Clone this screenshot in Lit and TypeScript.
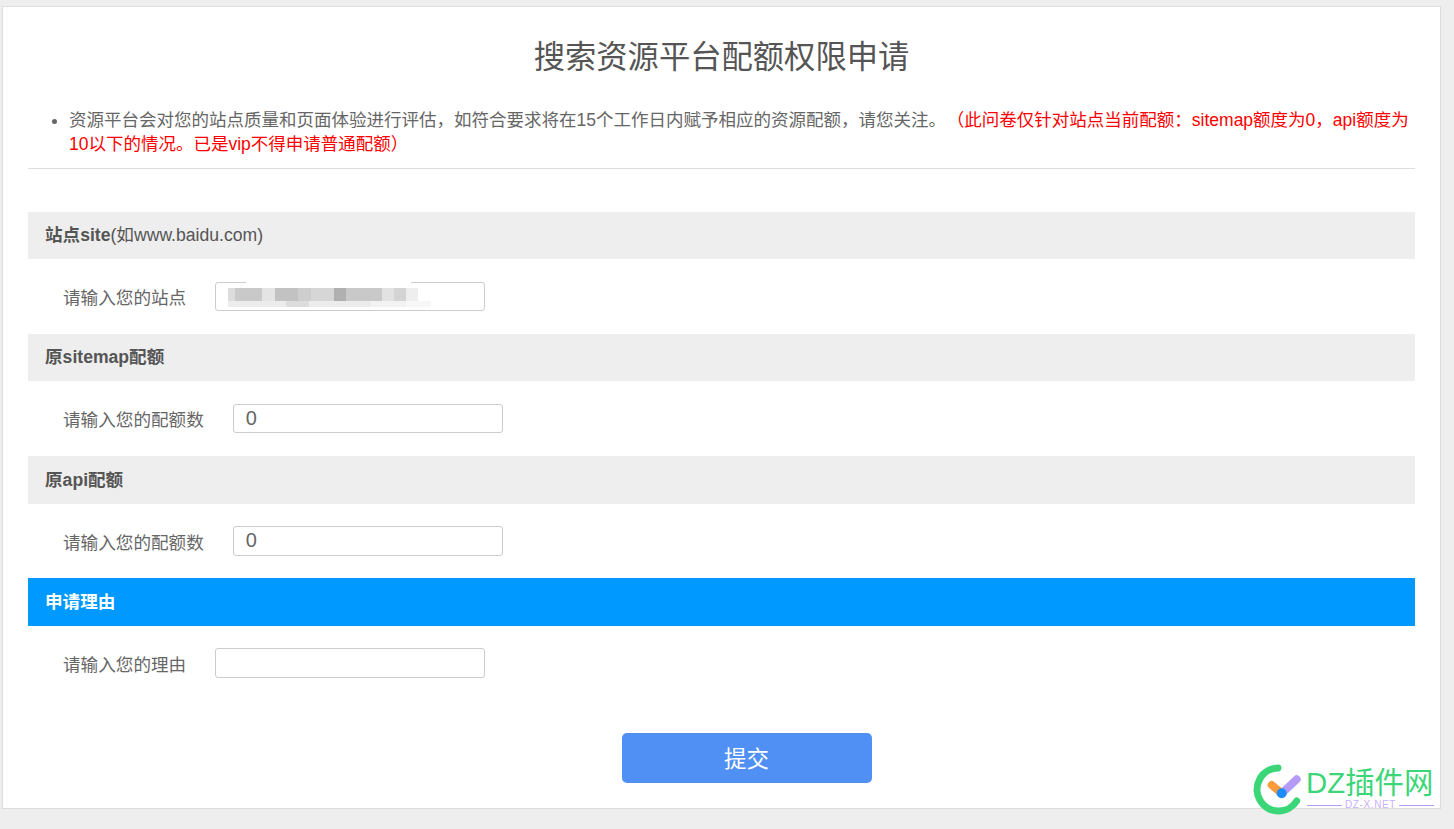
import { LitElement, html, css } from "lit";
import { customElement } from "lit/decorators.js";

@customElement("app-root")
export class AppRoot extends LitElement {
  static styles = css`
    :host {
      display: block;
      position: relative;
      height: 829px;
      overflow: hidden;
      background: #eeeeee;
      font-family: "Liberation Sans", "Noto Sans CJK SC", sans-serif;
      color: #666;
    }
    .card {
      box-sizing: border-box;
      margin: 6px 0 0 2px;
      width: 1439px;
      height: 803px;
      background: #fff;
      border: 1px solid #ddd;
      padding: 0 25px;
    }
    h1 {
      margin: 0;
      padding-top: 29px;
      height: 77px;
      box-sizing: border-box;
      font-size: 31.3px;
      line-height: 44px;
      font-weight: 400;
      text-align: center;
      color: #555;
    }
    ul {
      margin: 0;
      padding: 24px 0 12px 41px;
      border-bottom: 1px solid #ddd;
      height: 85px;
      box-sizing: border-box;
      font-size: 17.5px;
      line-height: 24px;
    }
    .red { color: #ff0000; margin-left: -4px; }
    .sections { margin-top: 43px; }
    .section { display: flex; flex-direction: column; height: 122px; }
    .head {
      box-sizing: border-box;
      height: 47px;
      padding-left: 17px;
      background: #eeeeee;
      font-size: 17.6px;
      line-height: 47px;
      color: #555;
    }
    .section.tall .head { height: 48px; line-height: 48px; }
    .head b { font-weight: 700; }
    .head.blue { background: #0099ff; color: #fff; }
    .row {
      flex: 1;
      display: flex;
      align-items: center;
      padding-left: 35px;
      font-size: 17.6px;
      color: #666;
    }
    .lbl { margin-right: 29px; }
    .field {
      position: relative;
      box-sizing: border-box;
      width: 270px;
      height: 29px;
      border: 1px solid #ccc;
      border-radius: 3px;
      padding-left: 12px;
      font-size: 20px;
      line-height: 27px;
      color: #666;
      background: #fff;
    }
    .section.tall .field { height: 30px; }
    .blur {
      position: absolute;
      left: -1px;
      top: 5px;
      display: flex;
      flex-direction: column;
    }
    .blur-row { display: flex; height: 13px; margin-left: 13px; }
    .blur-row.low { height: 6px; }
    .blur-row i { display: block; height: 100%; }
    .mask {
      position: absolute;
      left: 30px;
      top: -2px;
      width: 165px;
      height: 4px;
      background: #fff;
    }
    .actions { display: flex; justify-content: center; margin-top: 33px; padding-left: 50px; }
    .submit {
      width: 250px;
      height: 50px;
      border: 0;
      border-radius: 5px;
      background: #5090f5;
      color: #fff;
      font: inherit;
      font-size: 22.5px;
      padding: 0 0 3px;
    }
    .mark { position: absolute; left: 1252px; top: 762px; width: 56px; height: 56px; }
    .brand {
      position: absolute;
      left: 1306px;
      top: 765px;
      width: 130px;
      color: #3bd677;
      font-size: 29.4px;
      line-height: 36px;
      white-space: nowrap;
    }
    .sub {
      position: absolute;
      left: 1307px;
      top: 799px;
      width: 127px;
      display: flex;
      align-items: center;
      gap: 3px;
      color: #c9b0fa;
      font-size: 10px;
      line-height: 12px;
      letter-spacing: 0.6px;
      white-space: nowrap;
    }
    .sub span { flex: 1; height: 1px; background: #b79cf7; }
  `;

  private blurTop: [number, string][] = [
    [7, "#dcdcdc"], [27, "#c9c9c9"], [13, "#e4e4e4"], [23, "#c2c2c2"], [13, "#cecece"], [23, "#d6d6d6"],
    [12, "#b0b0b0"], [36, "#c9c9c9"], [12, "#e2e2e2"], [12, "#d4d4d4"], [12, "#eeeeee"],
  ];
  private blurLow: [number, string][] = [
    [58, "#ececec"], [23, "#dddddd"], [62, "#ececec"], [35, "#f2f2f2"], [25, "#f7f7f7"],
  ];

  private section(title: unknown, label: string, value: string, tall = false, blue = false, blurred = false) {
    return html`
      <div class="section ${tall ? "tall" : ""}">
        <div class="head ${blue ? "blue" : ""}">${title}</div>
        <div class="row">
          <span class="lbl">${label}</span>
          <div class="field">
            ${value}
            ${blurred
              ? html`<div class="mask"></div>
                <div class="blur">
                  <div class="blur-row">
                    ${this.blurTop.map(([w, c]) => html`<i style="width:${w}px;background:${c}"></i>`)}
                  </div>
                  <div class="blur-row low">
                    ${this.blurLow.map(([w, c]) => html`<i style="width:${w}px;background:${c}"></i>`)}
                  </div>
                </div>`
              : ""}
          </div>
        </div>
      </div>
    `;
  }

  render() {
    return html`
      <div class="card">
        <h1>搜索资源平台配额权限申请</h1>
        <ul>
          <li>
            资源平台会对您的站点质量和页面体验进行评估，如符合要求将在15个工作日内赋予相应的资源配额，请您关注。
            <span class="red">（此问卷仅针对站点当前配额：sitemap额度为0，api额度为10以下的情况。已是vip不得申请普通配额）</span>
          </li>
        </ul>
        <div class="sections">
          ${this.section(html`<b>站点site</b>(如www.baidu.com)`, "请输入您的站点", "", false, false, true)}
          ${this.section(html`<b>原sitemap配额</b>`, "请输入您的配额数", "0")}
          ${this.section(html`<b>原api配额</b>`, "请输入您的配额数", "0", true)}
          ${this.section(html`<b>申请理由</b>`, "请输入您的理由", "", true, true)}
        </div>
        <div class="actions"><button class="submit">提交</button></div>
      </div>

      <svg class="mark" viewBox="0 0 56 56" fill="none" aria-hidden="true">
        <path d="M26 6 A 21.5 21.5 0 1 0 44.7 39" stroke="#3bd677" stroke-width="7" stroke-linecap="round"/>
        <path d="M29.7 31.3 L44.7 17.3" stroke="#b59bf8" stroke-width="8" stroke-linecap="round"/>
        <path d="M19.7 23 L29.7 31.3" stroke="#fb9b3a" stroke-width="8" stroke-linecap="round"/>
        <circle cx="29.7" cy="31.3" r="5" fill="#1d8cf8"/>
      </svg>
      <div class="brand">DZ插件网</div>
      <div class="sub"><span></span>DZ-X.NET<span></span></div>
    `;
  }
}
